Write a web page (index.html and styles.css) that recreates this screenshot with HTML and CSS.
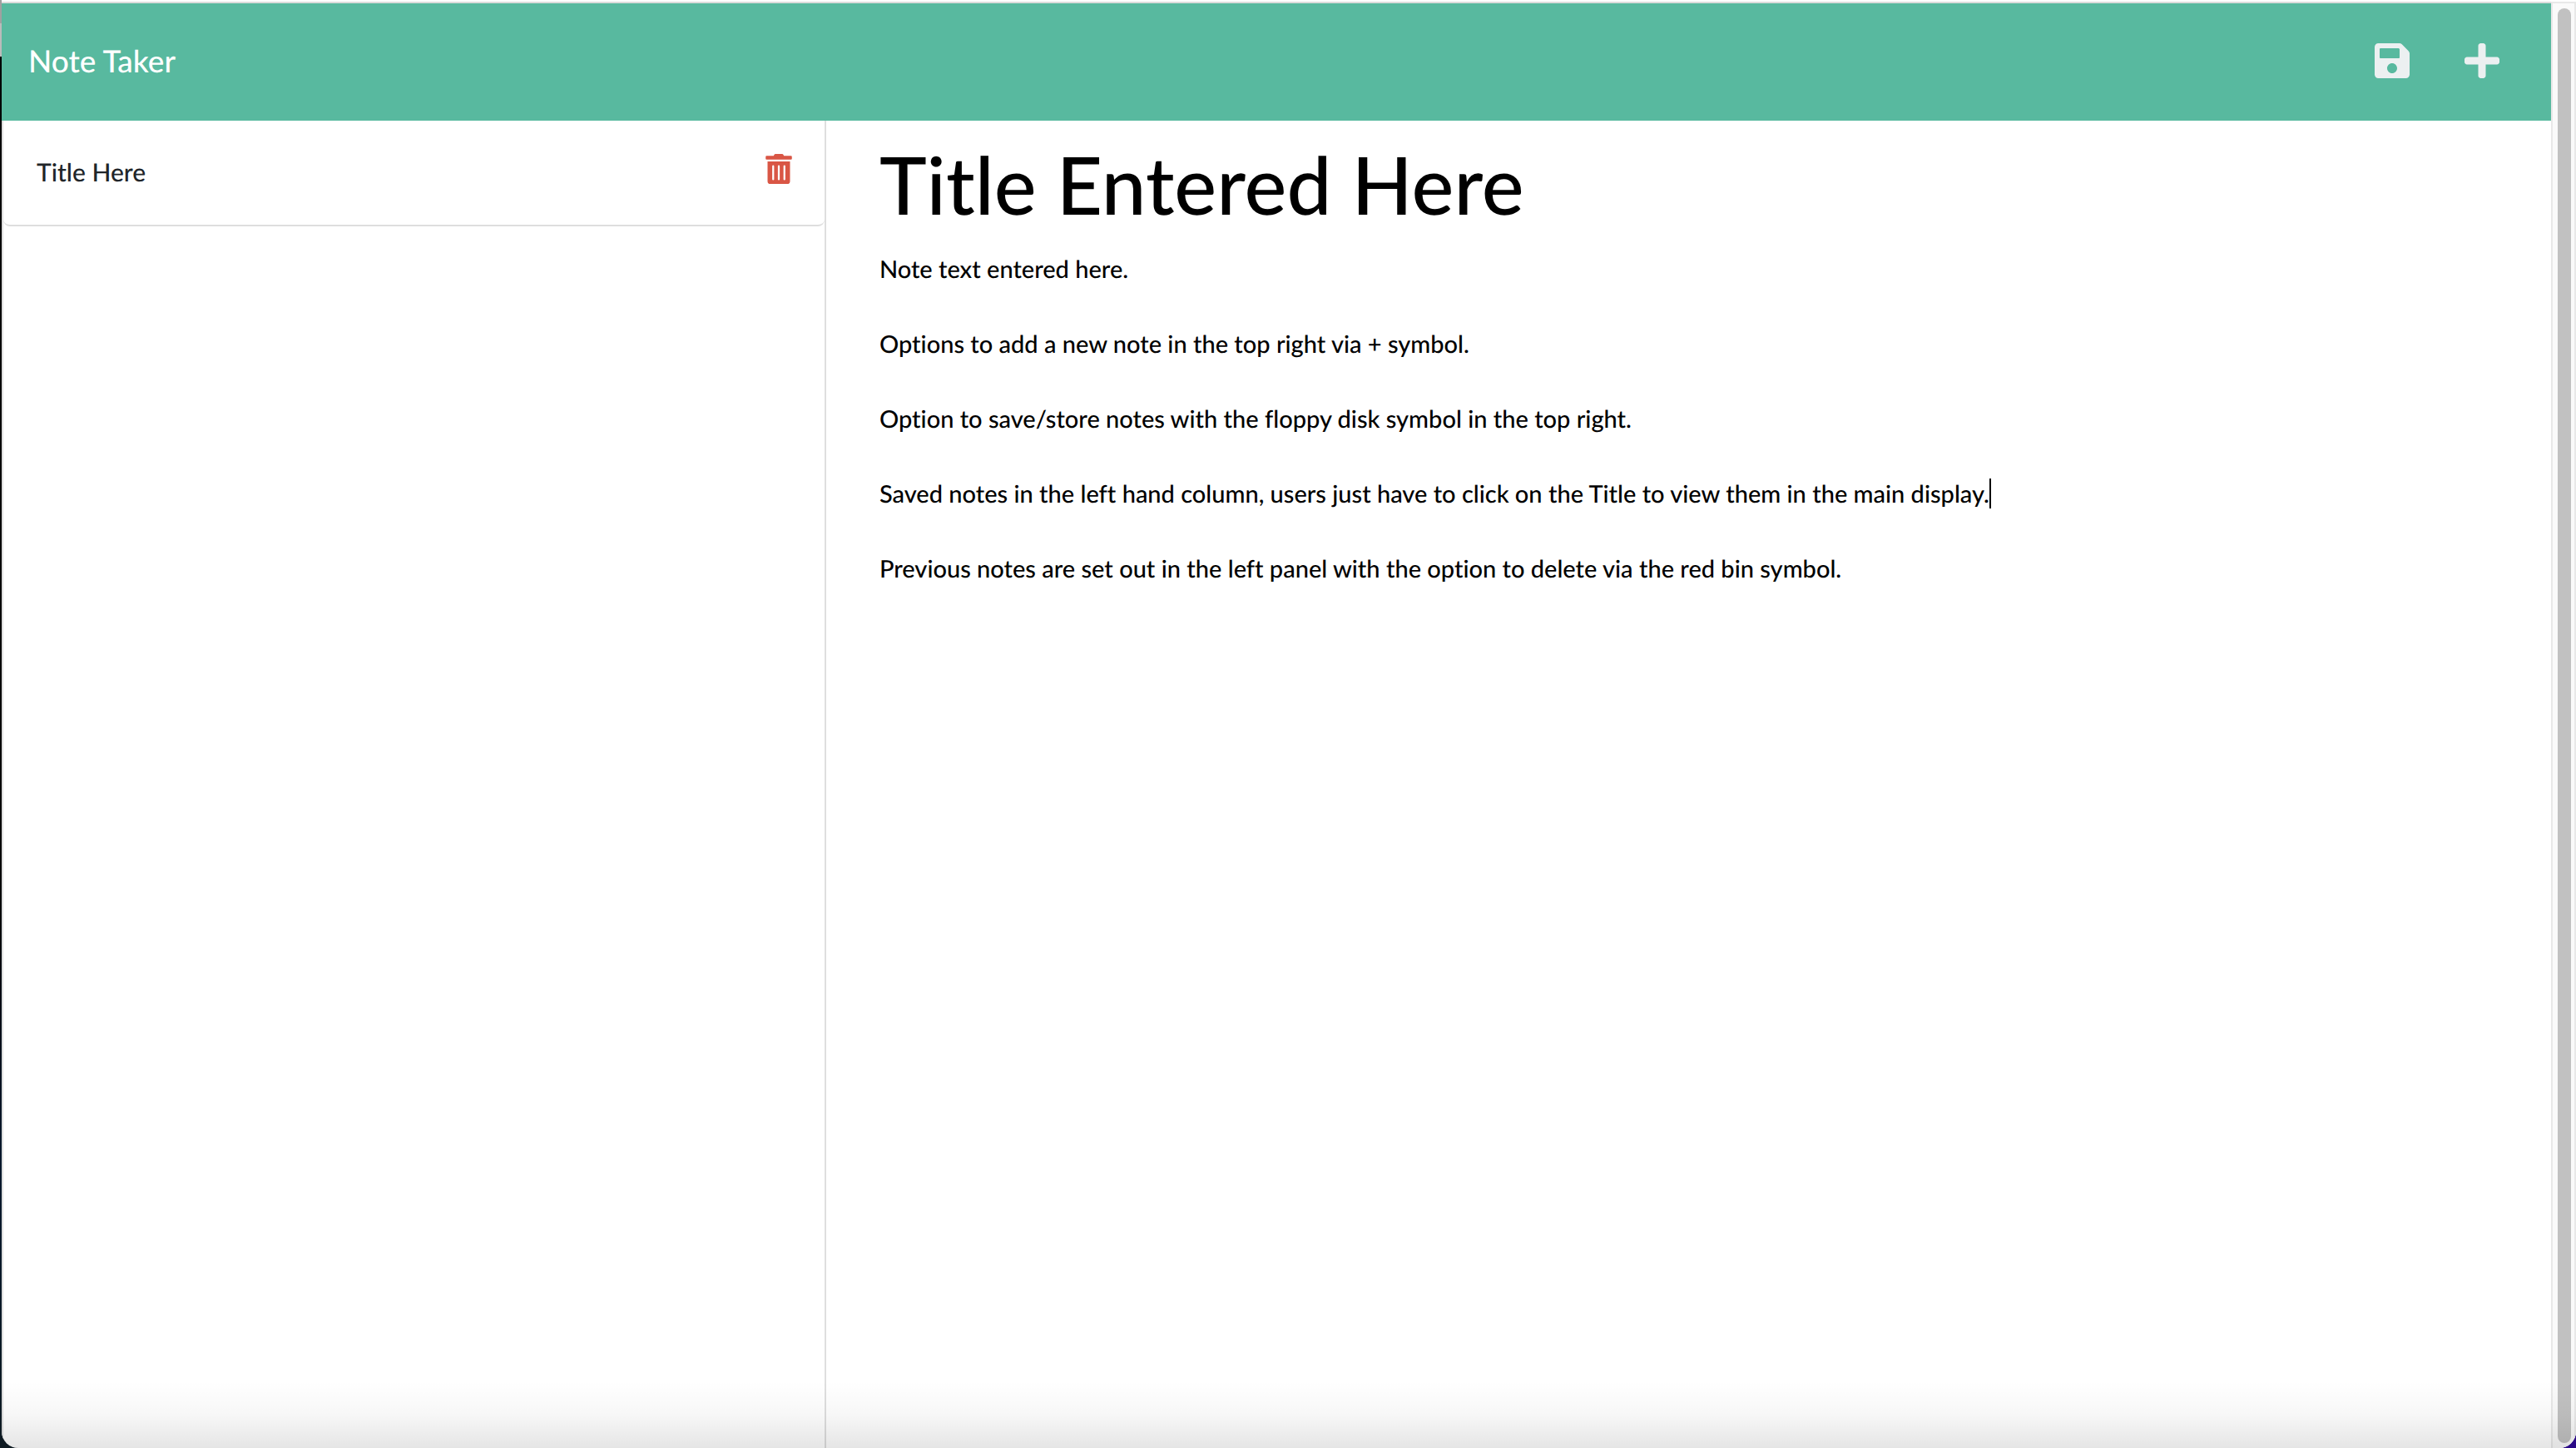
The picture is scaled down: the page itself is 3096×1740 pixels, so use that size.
FILE: index.html
```html
<!DOCTYPE html>
<html lang="en">
<head>
<meta charset="utf-8">
<title>Note Taker</title>
<link rel="stylesheet" href="styles.css">
</head>
<body>
<div class="window">
  <div class="page">
    <header class="navbar">
      <a class="brand" href="#">Note Taker</a>
      <div class="actions">
        <button class="icon-button" type="button" aria-label="Save note">
          <svg viewBox="0 0 448 512"><path fill-rule="evenodd" d="M433.9 129.9l-83.9-83.9A48 48 0 0 0 316.100 32H48C21.500 32 0 53.500 0 80v352c0 26.500 21.500 48 48 48h352c26.500 0 48-21.500 48-48V163.900a48 48 0 0 0-14.100-34zM224 416c-35.300 0-64-28.700-64-64 0-35.300 28.700-64 64-64s64 28.700 64 64c0 35.300-28.700 64-64 64zm96-304.500V212c0 6.600-5.400 12-12 12H76c-6.600 0-12-5.400-12-12V108c0-6.600 5.400-12 12-12h228.500c3.200 0 6.200 1.300 8.500 3.500l3.500 3.500A12 12 0 0 1 320 111.500z"/></svg>
        </button>
        <button class="icon-button" type="button" aria-label="New note">
          <svg viewBox="0 0 448 512"><path d="M416 208H272V64c0-17.700-14.300-32-32-32h-32c-17.700 0-32 14.300-32 32v144H32c-17.700 0-32 14.300-32 32v32c0 17.700 14.300 32 32 32h144v144c0 17.700 14.300 32 32 32h32c17.700 0 32-14.300 32-32V304h144c17.700 0 32-14.300 32-32v-32c0-17.700-14.300-32-32-32z"/></svg>
        </button>
      </div>
    </header>
    <div class="content">
      <aside class="sidebar">
        <ul class="notes">
          <li class="note">
            <span>Title Here</span>
            <button class="delete" type="button" aria-label="Delete note">
              <svg viewBox="0 0 448 512"><path fill-rule="evenodd" d="M32 464a48 48 0 0 0 48 48h288a48 48 0 0 0 48-48V128H32zm272-256a16 16 0 0 1 32 0v224a16 16 0 0 1-32 0zm-96 0a16 16 0 0 1 32 0v224a16 16 0 0 1-32 0zm-96 0a16 16 0 0 1 32 0v224a16 16 0 0 1-32 0zM432 32H312l-9.400-18.700A24 24 0 0 0 281.100 0H166.800a23.700 23.700 0 0 0-21.400 13.300L136 32H16A16 16 0 0 0 0 48v32a16 16 0 0 0 16 16h416a16 16 0 0 0 16-16V48a16 16 0 0 0-16-16z"/></svg>
            </button>
          </li>
        </ul>
      </aside>
      <main class="editor">
        <input class="title" type="text" aria-label="Note title" value="Title Entered Here">
        <div class="text-wrap">
          <textarea class="text" aria-label="Note text" spellcheck="false">Note text entered here.

Options to add a new note in the top right via + symbol.

Option to save/store notes with the floppy disk symbol in the top right.

Saved notes in the left hand column, users just have to click on the Title to view them in the main display.

Previous notes are set out in the left panel with the option to delete via the red bin symbol.</textarea>
          <span class="caret"></span>
        </div>
      </main>
    </div>
  </div>
  <div class="scrollbar"><div class="thumb"></div></div>
  <div class="shade"></div>
</div>
</body>
</html>
```

FILE: styles.css
```css
* {
  box-sizing: border-box;
}

body {
  margin: 0;
  height: 100vh;
  padding-left: 2px;
  overflow: hidden;
  background:
    linear-gradient(#a0a0a0 28px, #bbb 28px 68px, #000 68px 60%, #04182c 80%, #0e1a22) left / 2px 100% no-repeat,
    linear-gradient(90deg, #0e1a22 50%, #2a0a86 50%);
  font-family: Lato, sans-serif;
  font-size: 30px;
  font-weight: 500;
  line-height: 45px;
  font-variant-ligatures: none;
  text-rendering: geometricPrecision;
  color: #212529;
}

.window {
  position: relative;
  display: flex;
  height: 100%;
  padding-top: 2px;
  overflow: hidden;
  background: #fff;
  border-radius: 0 0 20px 20px;
}

.page {
  flex: 1;
  display: flex;
  flex-direction: column;
  border-top: 2px solid #dcdcdc;
}

.navbar {
  display: flex;
  align-items: center;
  justify-content: space-between;
  height: 141px;
  padding: 0 62px 4px 32px;
  background: #58b99f;
}

.brand {
  color: #fff;
  font-size: 37px;
  text-decoration: none;
}

.actions {
  display: flex;
  gap: 66px;
}

button {
  padding: 0;
  border: 0;
  background: none;
}

.icon-button svg {
  display: block;
  width: 42px;
  height: 48px;
  fill: #ecf0f1;
}

.content {
  flex: 1;
  display: grid;
  grid-template-columns: calc((100% - 95px) / 3) 1fr;
  border-left: 2px solid #dedede;
}

.sidebar {
  border-right: 2px solid #dedede;
}

.notes {
  margin: 0;
  padding: 0;
  list-style: none;
}

.note {
  display: flex;
  justify-content: space-between;
  height: 127px;
  padding: 40px 39px 0 40px;
  border-bottom: 2px solid #dedede;
  border-radius: 0 0 8px 8px;
}

.delete {
  height: 36px;
}

.delete svg {
  display: block;
  width: 32px;
  height: 36px;
  fill: #d95645;
}

.editor {
  padding: 18px 64px;
}

.title,
.text {
  display: block;
  width: 100%;
  padding: 0;
  border: 0;
  outline: 0;
  background: none;
  color: #000;
  font-family: inherit;
  font-weight: inherit;
  font-variant-ligatures: inherit;
  text-rendering: inherit;
}

.title {
  height: 116px;
  font-size: 96px;
}

.text-wrap {
  position: relative;
  margin-top: 22px;
}

.text {
  height: 1200px;
  resize: none;
  font-size: 29px;
  line-height: 45px;
}

.caret {
  position: absolute;
  left: 1334px;
  top: 274px;
  width: 2px;
  height: 36px;
  background: #000;
}

.scrollbar {
  width: 30px;
  padding: 6px 4px 6px 6px;
  border: solid #e8e8e8;
  border-width: 2px 2px 0;
  background: #fafafa;
}

.thumb {
  width: 16px;
  height: 100%;
  border-radius: 8px;
  background: #c1c1c1;
}

.shade {
  position: absolute;
  inset: auto 0 0;
  height: 80px;
  background: linear-gradient(rgb(0 0 0 / 0%), rgb(0 0 0 / 3%) 50%, rgb(0 0 0 / 10%));
  pointer-events: none;
}
```
